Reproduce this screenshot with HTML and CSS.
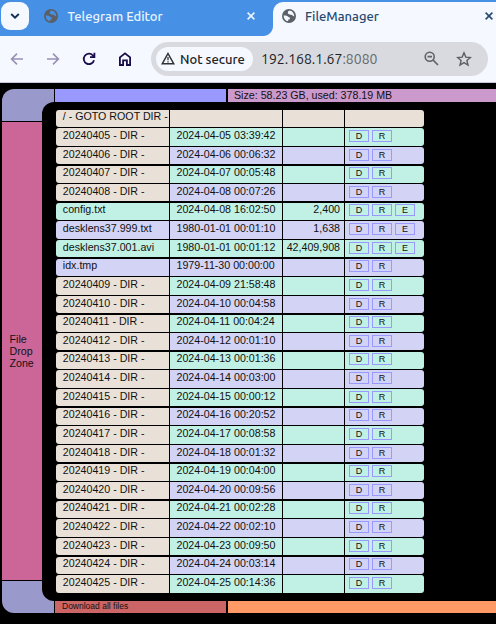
FILE: index.html
```html
<!DOCTYPE html>
<html lang="en">
<head>
<meta charset="utf-8">
<title>FileManager</title>
<link rel="stylesheet" href="styles.css">
</head>
<body>
<svg class="defs" width="0" height="0">
  <symbol id="globe" viewBox="0 0 14 14">
    <circle cx="7" cy="7" r="7" fill="#5b5f66"/>
    <path d="M1.6 6.6 Q4.5 6 6 7.6 Q6.4 8.6 7.9 8.6 L7.9 10.2 L6.3 10.6 L6.1 12.3 Q2 11.8 1.6 6.6Z M7.4 1.5 L9.8 2.2 Q12.3 4 12.4 7.2 Q10.8 7.3 10.2 6 L7.6 5.6 L5.8 4.6 L6 2.6Z" fill="currentColor"/>
  </symbol>
  <symbol id="close" viewBox="0 0 10 10">
    <path d="M1.6 1.6 8.4 8.4M8.4 1.6 1.6 8.4" stroke="currentColor" stroke-width="1.6"/>
  </symbol>
</svg>
<header class="tabs">
  <div class="search"><svg width="10" height="6" viewBox="0 0 10 6"><path d="M1.2 1 5 4.7 8.8 1" fill="none" stroke="#143058" stroke-width="1.9"/></svg></div>
  <div class="tab idle">
    <svg class="globe" width="14" height="14"><use href="#globe"/></svg>
    <span class="label">Telegram Editor</span>
    <svg class="x" width="10" height="10"><use href="#close"/></svg>
  </div>
  <div class="tab current">
    <svg class="globe" width="14" height="14"><use href="#globe"/></svg>
    <span class="label">FileManager</span>
    <svg class="x" width="10" height="10"><use href="#close"/></svg>
  </div>
</header>
<nav class="toolbar">
  <svg class="nav" width="14" height="14" viewBox="0 0 14 14"><path d="M13 7H2M7 1.6 1.6 7 7 12.4" fill="none" stroke="#9790b5" stroke-width="1.6"/></svg>
  <svg class="nav" width="14" height="14" viewBox="0 0 14 14"><path d="M1 7H12M7 1.6 12.4 7 7 12.4" fill="none" stroke="#9790b5" stroke-width="1.6"/></svg>
  <svg class="nav" width="14" height="14" viewBox="0 0 14 14"><path d="M12 8.2A5.2 5.2 0 1 1 10.9 3.5L12.3 5M12.4 .8V5.2H8" fill="none" stroke="#190c4b" stroke-width="1.8"/></svg>
  <svg class="nav" width="14" height="14" viewBox="0 0 14 14"><path d="M1.9 5.4 7 1.3 12.1 5.4V13H8.9V8.3H5.1V13H1.9Z" fill="none" stroke="#190c4b" stroke-width="1.8"/></svg>
  <div class="omnibox">
    <div class="chip">
      <svg width="14" height="13" viewBox="0 0 14 13"><path d="M7 1.5 12.8 11.8H1.2Z" fill="none" stroke="#303236" stroke-width="1.5"/><path d="M7 5V8.3M7 9.2V10.5" stroke="#303236" stroke-width="1.3"/></svg>
      <span class="secure">Not secure</span>
    </div>
    <span class="url">192.168.1.67<span class="port">:8080</span></span>
    <svg class="lens" width="15" height="15" viewBox="0 0 15 15"><circle cx="5.7" cy="5.7" r="4.5" fill="none" stroke="#606266" stroke-width="1.6"/><path d="M3.5 5.7H8M9 9 14 14" stroke="#606266" stroke-width="1.7"/></svg>
    <svg class="star" width="16" height="16" viewBox="0 0 16 16"><path d="M8 1.8 9.8 6.1 14.4 6.5 10.9 9.5 12 14.1 8 11.6 4 14.1 5.1 9.5 1.6 6.5 6.2 6.1Z" fill="none" stroke="#5c5e63" stroke-width="1.4"/></svg>
  </div>
</nav>
<main class="page">
  <aside class="side">
    <div class="corner top"></div>
    <div class="drop">File<br>Drop<br>Zone</div>
    <div class="corner bottom"></div>
  </aside>
  <section class="content">
    <div class="bar upper"><div class="seg free"></div><div class="seg usage">Size: 58.23 GB, used: 378.19 MB</div></div>
    <div class="panel"><div class="rows" id="rows"></div></div>
    <div class="bar lower"><div class="seg download"><span>Download all files</span></div><div class="seg rest"></div></div>
  </section>
</main>
<script src="files.js"></script>
</body>
</html>
```
FILE: files.js
```js
const entries = [
  ["/ - GOTO ROOT DIR -", "", "", ""],
  ["20240405 - DIR -", "2024-04-05 03:39:42", "", "DR"],
  ["20240406 - DIR -", "2024-04-06 00:06:32", "", "DR"],
  ["20240407 - DIR -", "2024-04-07 00:05:48", "", "DR"],
  ["20240408 - DIR -", "2024-04-08 00:07:26", "", "DR"],
  ["config.txt", "2024-04-08 16:02:50", "2,400", "DRE"],
  ["desklens37.999.txt", "1980-01-01 00:01:10", "1,638", "DRE"],
  ["desklens37.001.avi", "1980-01-01 00:01:12", "42,409,908", "DRE"],
  ["idx.tmp", "1979-11-30 00:00:00", "", "DR"],
  ["20240409 - DIR -", "2024-04-09 21:58:48", "", "DR"],
  ["20240410 - DIR -", "2024-04-10 00:04:58", "", "DR"],
  ["20240411 - DIR -", "2024-04-11 00:04:24", "", "DR"],
  ["20240412 - DIR -", "2024-04-12 00:01:10", "", "DR"],
  ["20240413 - DIR -", "2024-04-13 00:01:36", "", "DR"],
  ["20240414 - DIR -", "2024-04-14 00:03:00", "", "DR"],
  ["20240415 - DIR -", "2024-04-15 00:00:12", "", "DR"],
  ["20240416 - DIR -", "2024-04-16 00:20:52", "", "DR"],
  ["20240417 - DIR -", "2024-04-17 00:08:58", "", "DR"],
  ["20240418 - DIR -", "2024-04-18 00:01:32", "", "DR"],
  ["20240419 - DIR -", "2024-04-19 00:04:00", "", "DR"],
  ["20240420 - DIR -", "2024-04-20 00:09:56", "", "DR"],
  ["20240421 - DIR -", "2024-04-21 00:02:28", "", "DR"],
  ["20240422 - DIR -", "2024-04-22 00:02:10", "", "DR"],
  ["20240423 - DIR -", "2024-04-23 00:09:50", "", "DR"],
  ["20240424 - DIR -", "2024-04-24 00:03:14", "", "DR"],
  ["20240425 - DIR -", "2024-04-25 00:14:36", "", "DR"]
];

document.getElementById("rows").innerHTML = entries.map(([name, date, size, actions], i) => {
  const tone = i === 0 ? "root" : i % 2 ? "mint" : "lilac";
  const dir = name.includes("DIR") ? " dir" : "";
  const buttons = [...actions].map(a => `<span class="btn">${a}</span>`).join("");
  return `<div class="row ${tone}"><div class="cell name${dir}">${name}</div><div class="cell date">${date}</div><div class="cell size">${size}</div><div class="cell actions">${buttons}</div></div>`;
}).join("");
```
FILE: styles.css
```css
* { box-sizing: border-box; }
body {
  margin: 0;
  width: 496px;
  height: 624px;
  overflow: hidden;
  background: #000;
  font: 10.667px/12px "Liberation Sans", Arial, sans-serif;
  color: #111;
}
svg { display: block; flex: none; }
.defs { position: absolute; }

.tabs {
  height: 36px;
  display: flex;
  background: #4690e5;
  font: 500 13px/28px Ubuntu, "Noto Sans", sans-serif;
}
.search {
  width: 28px;
  height: 28px;
  margin: 2px 0 0 1px;
  border-radius: 9px;
  background: #f5f9ff;
  display: flex;
  align-items: center;
  justify-content: center;
}
.tab { display: flex; align-items: center; white-space: nowrap; }
.globe { margin-right: 9px; }
.label { flex: 1; }
.idle {
  width: 244px;
  padding: 0 17px 4px 15px;
  color: #e9f4ff;
}
.idle .label { padding-left: .5px; }
.idle .globe { color: #4690e5; }
.current {
  width: 223px;
  margin-top: 2px;
  padding: 0 2px 6px 9px;
  border-radius: 10px 0 0 0;
  background: #f5f9ff;
  color: #26496f;
}
.current .globe { color: #f5f9ff; }

.toolbar {
  height: 47px;
  display: flex;
  align-items: center;
  padding: 0 8px 1px 10px;
  gap: 22px;
  background: #f5f8fe;
  border-bottom: 1px solid #c7c5dc;
}
.idle { position: relative; }
.idle::after {
  content: "";
  position: absolute;
  right: 0;
  bottom: 0;
  width: 10px;
  height: 10px;
  background: radial-gradient(circle at 0 0, #4690e5 9.5px, #f5f8fe 10.5px);
}
.omnibox {
  width: 337px;
  height: 34px;
  margin-left: -3px;
  padding: 0 16px 0 5px;
  border-radius: 17px;
  background: #d9dadf;
  display: flex;
  align-items: center;
  flex: none;
  font: 14px/24px Ubuntu, "Noto Sans", sans-serif;
}
.chip {
  width: 97px;
  height: 24px;
  border-radius: 12px;
  padding-left: 5px;
  background: #f5f8fe;
  display: flex;
  align-items: center;
  gap: 5px;
  white-space: nowrap;
}
.secure { font-size: 13px; font-weight: 500; color: #202226; }
.url { flex: 1; margin-left: 8px; color: #202226; }
.port { color: #66686d; }
.star { margin-left: 17px; }

.page {
  height: 524px;
  margin: 6px 0 0 2px;
  display: grid;
  grid-template-columns: 40px 1fr;
  background: #000;
}
.side {
  display: grid;
  grid-template-rows: 32px 458px 32px;
  gap: 1px;
  z-index: 0;
}
.corner { background: #9999cc; width: 52px; }
.corner.top { border-radius: 12px 0 0 0; }
.corner.bottom { border-radius: 0 0 0 12px; }
.drop {
  background: #cc6699;
  display: flex;
  align-items: center;
  padding-left: 7.5px;
}
.content {
  display: grid;
  grid-template-rows: 13px 499px 12px;
  z-index: 1;
}
.bar { margin-left: 13px; display: grid; grid-template-columns: 171px 1fr; gap: 2px; }
.free { background: #9999ff; }
.usage { background: #cc99cc; padding-left: 6px; line-height: 13px; }
.download {
  background: #cc6666;
  padding-left: 7px;
  font-size: 8.5px;
  line-height: 10px;
}
.rest { background: #ff9966; }
.panel {
  padding: 7.72px 0 0 14px;
  border-radius: 12px 0 0 12px;
  background: #000;
}
.rows {
  width: 368px;
  display: grid;
  grid-auto-rows: 17.267px;
  row-gap: 1.36px;
}
.row {
  display: grid;
  grid-template-columns: 113px 112px 61px 79px;
  column-gap: 1px;
}
.cell { padding-top: .6px; white-space: nowrap; }
.root .cell, .row .dir { background: #e9e1d7; }
.mint .cell { background: #c1f0e4; }
.lilac .cell { background: #d3d3f5; }
.row.mint .dir, .row.lilac .dir { background: #e9e1d7; }
.name { padding-left: 6.8px; border-radius: 3px 0 0 3px; }
.date { padding-left: 6.5px; }
.size { padding-right: 4px; text-align: right; }
.actions {
  padding: 1.6px 0 0 4px;
  border-radius: 0 3px 3px 0;
  display: flex;
  gap: 3px;
}
.btn {
  width: 20px;
  height: 12px;
  border: 1px solid #9999ff;
  font-size: 9px;
  line-height: 11px;
  text-align: center;
}
```
